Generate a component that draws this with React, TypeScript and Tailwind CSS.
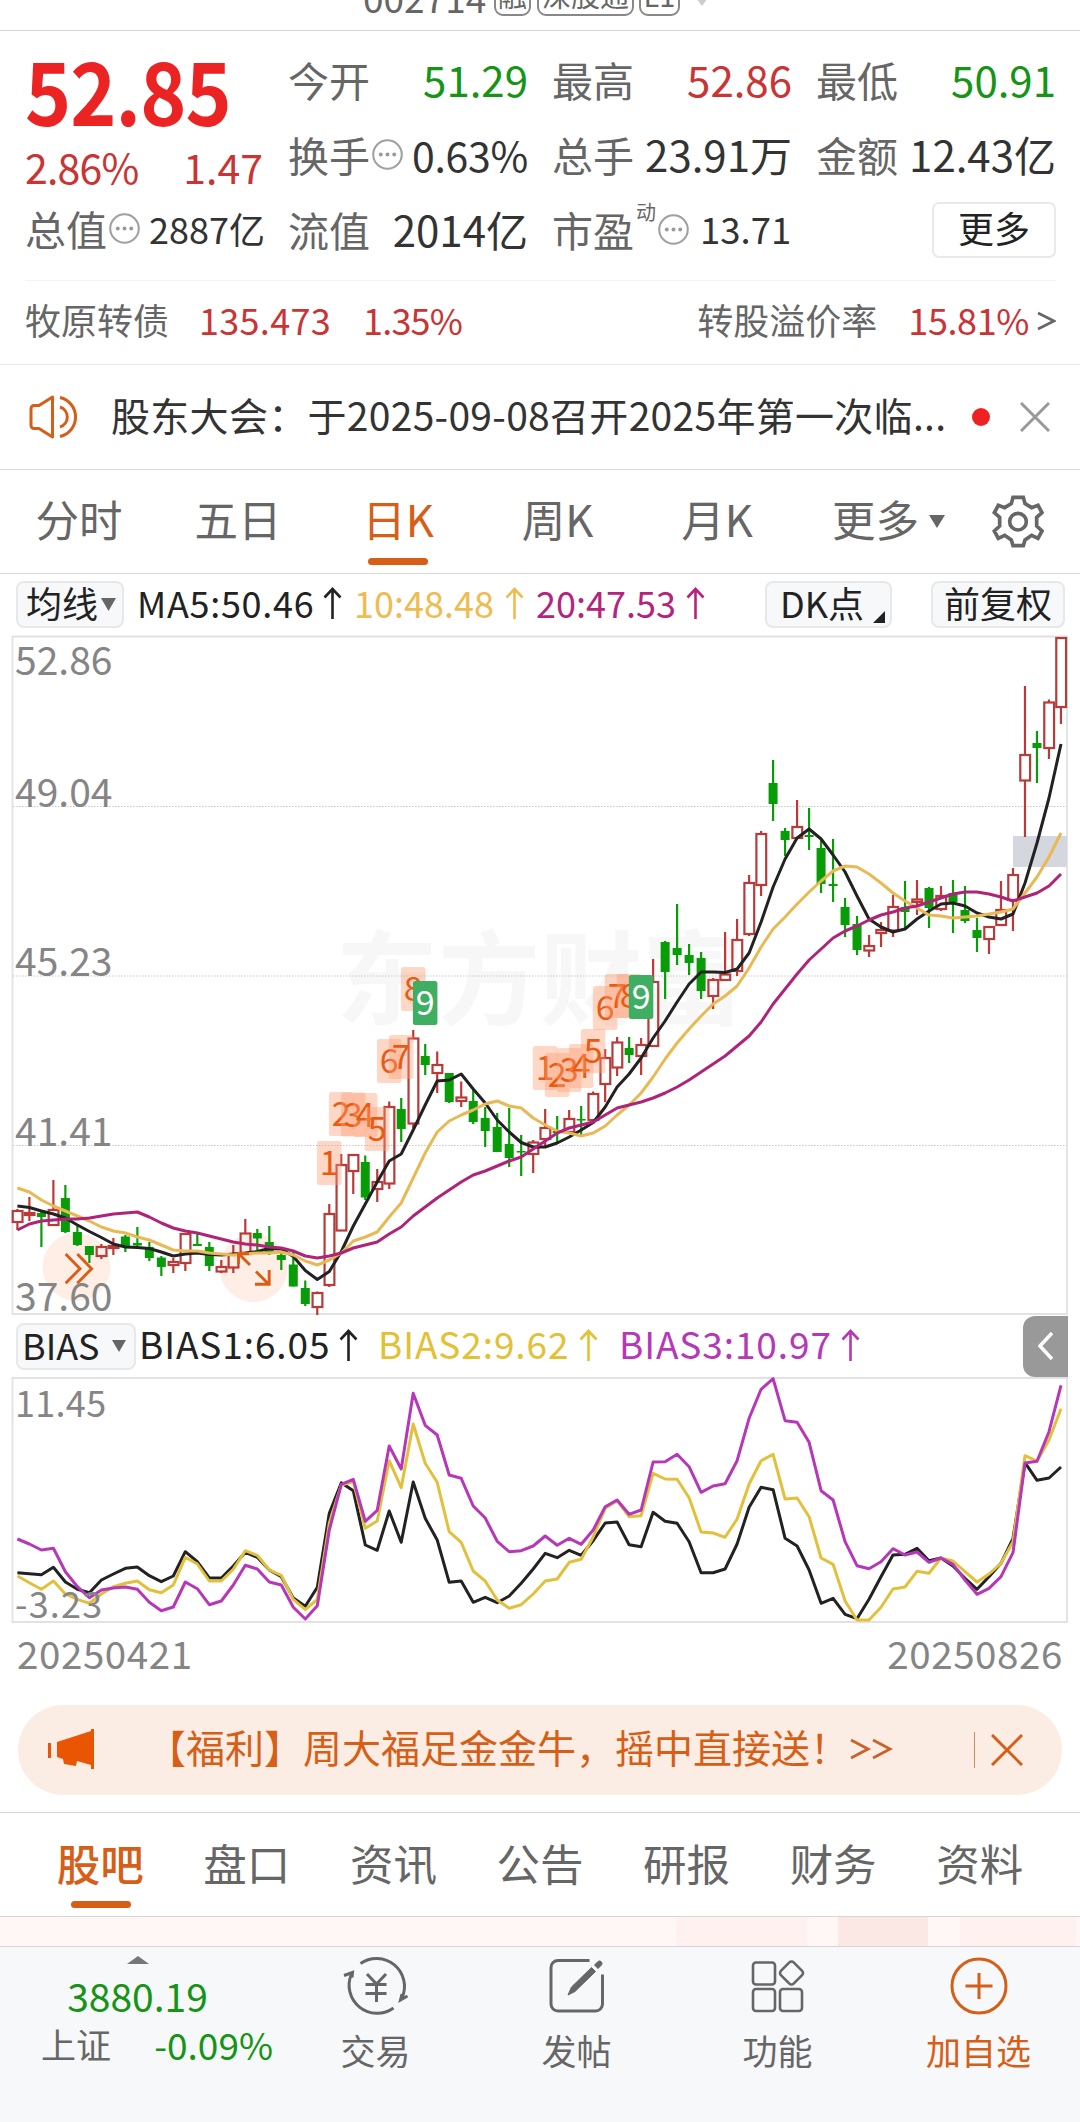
import type { ReactNode } from "react";

// [direction, high, body top, body bottom, low]
type Candle = ["r" | "g", number, number, number, number];

const candles: Candle[] = [
  ["r", 1209, 1211, 1222, 1230], ["r", 1197, 1213, 1215, 1221], ["g", 1211, 1213, 1217, 1247], ["r", 1180, 1210, 1225, 1225],
  ["g", 1185, 1198, 1232, 1233], ["g", 1226, 1232, 1245, 1246], ["g", 1246, 1246, 1255, 1263], ["r", 1244, 1247, 1256, 1259],
  ["r", 1238, 1246, 1248, 1255], ["g", 1235, 1236.5, 1247, 1252], ["g", 1227, 1243, 1245.5, 1247], ["g", 1242, 1247, 1258, 1261],
  ["g", 1256, 1257.5, 1267, 1276], ["r", 1258, 1262, 1265, 1273], ["r", 1233, 1234, 1263, 1271], ["g", 1234, 1244, 1246, 1246],
  ["g", 1242, 1247, 1266, 1271], ["r", 1260, 1267, 1271.5, 1273], ["r", 1245, 1255, 1267.5, 1273], ["r", 1219, 1233.5, 1254, 1254],
  ["g", 1229, 1233, 1238.5, 1253], ["g", 1226, 1242, 1254, 1255], ["g", 1253, 1255, 1260, 1270], ["g", 1250, 1264.5, 1286.5, 1286.5],
  ["g", 1280.5, 1288, 1304, 1306], ["r", 1291.5, 1293, 1307, 1315], ["r", 1204, 1214, 1285, 1287], ["r", 1154, 1165, 1230.5, 1231],
  ["r", 1154, 1155, 1171, 1194], ["g", 1155.5, 1162, 1197.5, 1200], ["r", 1169, 1182, 1189, 1202], ["r", 1101.5, 1107, 1183.5, 1189],
  ["g", 1098, 1109, 1129, 1142], ["r", 1030, 1038.5, 1123.5, 1128], ["g", 1044, 1056, 1065, 1075], ["r", 1051.5, 1065, 1073, 1093],
  ["g", 1073, 1073, 1102, 1103], ["r", 1081.5, 1097.5, 1101, 1107], ["g", 1090, 1101, 1122, 1124], ["g", 1107, 1118, 1131, 1147],
  ["g", 1113, 1127, 1152, 1152], ["g", 1108, 1144, 1158, 1167], ["g", 1135, 1151, 1152.5, 1176], ["r", 1140, 1142.5, 1154, 1173],
  ["r", 1109, 1128, 1139, 1148], ["g", 1116, 1131, 1133, 1143], ["r", 1110, 1119, 1132, 1134], ["g", 1106, 1119, 1120.5, 1135],
  ["r", 1091.5, 1094, 1120, 1123], ["r", 1049, 1058, 1084, 1102], ["r", 1037, 1042.5, 1067.5, 1076], ["g", 1037, 1048, 1055, 1063],
  ["r", 1038, 1045, 1056, 1075], ["r", 959, 982, 1046, 1047], ["g", 941, 942, 972, 999], ["g", 904, 948, 955, 965],
  ["g", 944, 955, 963, 975], ["g", 952, 958, 991, 999], ["r", 978, 980, 996, 1009], ["r", 932, 974.5, 980, 981],
  ["r", 919, 940, 971, 976], ["r", 875, 883, 934, 936], ["r", 831, 834, 885, 896], ["g", 760, 783, 804, 821],
  ["g", 828, 831, 840, 856], ["r", 800, 827, 838, 839], ["g", 808, 835, 837, 850], ["g", 840, 848, 884, 893],
  ["g", 839, 884, 886, 902], ["g", 898, 907, 925, 937], ["g", 916, 924, 950, 955], ["r", 935, 946, 950.5, 957],
  ["r", 922, 930, 933, 947], ["r", 895, 907, 930.5, 937], ["g", 881, 907, 912, 929], ["r", 880, 899.5, 902, 915],
  ["g", 887, 888, 908, 928], ["r", 886, 896, 909, 911], ["g", 880, 893, 902, 933], ["g", 886, 910, 921, 923],
  ["g", 918, 930, 938, 952], ["r", 926, 927, 939, 954], ["r", 881, 910, 925, 926], ["r", 868, 875, 900, 931],
  ["r", 686, 755, 780.5, 837], ["g", 731, 743, 748, 783], ["r", 699.5, 702.5, 748, 759], ["r", 637, 638, 707, 724],
];

const ma5 = [
  1206, 1207.5, 1211, 1214, 1218, 1225, 1231.5, 1237.5, 1244, 1247, 1247.5, 1248.5, 1252, 1256, 1254, 1253, 1254.5, 1255, 1254, 1253,
  1251.5, 1248.5, 1249, 1256.5, 1270.5, 1279.5, 1271.5, 1251.5, 1226, 1204, 1182, 1161, 1154, 1130, 1105, 1081, 1080, 1074, 1089, 1103,
  1120, 1132, 1142.5, 1147, 1147, 1143, 1137, 1130, 1122.5, 1107, 1087, 1074, 1058, 1038, 1021, 1002, 984, 972, 972, 972.5,
  969, 953, 922, 887, 859, 838, 829, 839, 855, 872, 896, 919, 927, 932, 929, 919, 911, 904, 903, 906,
  913, 917, 919, 914, 883, 843, 798, 744,
];

const ma10 = [
  1188, 1192, 1200, 1206, 1211, 1216, 1221, 1227, 1231, 1233, 1237, 1240, 1245, 1250, 1251, 1251, 1253, 1254, 1255, 1254,
  1253, 1253, 1252, 1255, 1261, 1265, 1260, 1253, 1241, 1237, 1232, 1217, 1203, 1178, 1153, 1132, 1121, 1115, 1110, 1104,
  1101, 1106, 1108, 1118, 1125, 1131, 1133, 1136, 1133, 1126, 1115, 1105, 1093, 1077, 1059, 1043, 1029, 1016, 1004, 996,
  986, 968, 947, 929, 917, 904, 892, 881, 871, 866, 867, 874, 883, 893, 901, 908, 915, 916, 918, 917,
  916, 914, 912, 909, 893, 877, 857, 833,
];

const ma20 = [
  1230, 1224, 1221, 1220, 1219, 1219, 1218, 1216, 1214, 1213, 1212, 1217, 1223, 1228, 1231, 1233, 1236, 1239, 1242, 1244,
  1245, 1247, 1248, 1251, 1256, 1258, 1256, 1253, 1248, 1245, 1242, 1234, 1227, 1216, 1207, 1198, 1190, 1182, 1175, 1171,
  1166, 1161, 1157, 1149, 1141, 1133, 1128, 1125, 1122, 1115, 1108, 1105, 1102, 1098, 1093, 1087, 1080, 1072, 1064, 1056,
  1046, 1036, 1022, 1004, 989, 974, 960, 949, 938, 931, 926, 920, 915, 912, 908, 906, 902, 898, 894, 892,
  892, 894, 897, 901, 897, 893, 886, 874,
];

// BIAS series are kept at three units per pixel
const bias1 = [
  608, 611, 614, 592, 636, 658, 668, 630, 612, 595, 591, 617, 635, 618, 545, 575, 624, 624, 588, 547, 562, 600, 620, 684, 709, 652, 430,
  338, 362, 525, 541, 423, 517, 336, 445, 510, 637, 633, 697, 682, 698, 678, 640, 597, 550, 563, 541, 556, 512, 459, 456, 524, 530, 427,
  454, 460, 515, 608, 608, 597, 522, 412, 352, 359, 505, 528, 600, 700, 685, 733, 746, 688, 620, 555, 553, 535, 572, 564, 588, 625, 658,
  620, 580, 505, 278, 331, 324, 291,
];

const bias2 = [
  618, 638, 658, 633, 672, 688, 700, 672, 650, 640, 633, 659, 668, 645, 562, 582, 633, 633, 598, 542, 556, 600, 616, 688, 719, 688, 460,
  345, 335, 475, 453, 272, 353, 162, 280, 337, 485, 517, 603, 633, 690, 715, 704, 672, 633, 627, 577, 568, 500, 415, 392, 440, 437, 310,
  327, 328, 383, 486, 489, 502, 447, 342, 272, 253, 387, 384, 440, 564, 583, 693, 750, 750, 712, 657, 651, 604, 610, 564, 573, 605, 636,
  612, 580, 515, 257, 273, 210, 116,
];

const bias3 = [
  507, 522, 540, 535, 605, 650, 683, 660, 654, 651, 658, 697, 722, 711, 636, 656, 704, 693, 645, 586, 597, 636, 645, 712, 747, 707, 480,
  343, 328, 454, 421, 228, 297, 70, 166, 195, 315, 325, 408, 444, 514, 545, 542, 528, 498, 526, 505, 523, 480, 410, 390, 433, 420, 276,
  275, 253, 290, 367, 348, 341, 272, 145, 58, 26, 152, 157, 217, 362, 390, 515, 587, 596, 575, 536, 555, 546, 577, 564, 583, 630, 673,
  655, 620, 548, 279, 274, 185, 46,
];

// [candle index, top, digit]
const marks: [number, number, number][] = [
  [26, 1141, 1], [27, 1092, 2], [28, 1092.5, 3], [29, 1093, 4], [30, 1107, 5], [31, 1039, 6], [32, 1035, 7], [33, 967, 8], [34, 981, 9],
  [44, 1046, 1], [45, 1053, 2], [46, 1048, 3], [47, 1044, 4], [48, 1029, 5], [49, 986, 6], [50, 974, 7], [51, 974, 8], [52, 975, 9],
];

const cx = (i: number) => 17.4 + i * 11.995;
const line = (ys: number[]) => ys.map((y, i) => `${cx(i).toFixed(1)},${y}`).join(" ");
const biasLine = (ys: number[]) => line(ys.map((y) => +(1370 + y / 3).toFixed(1)));

function Dots() {
  return (
    <svg width="31" height="31" viewBox="0 0 30 30" className="ml-[2px] shrink-0" fill="none">
      <circle cx="15" cy="15" r="13.8" stroke="#a0a0a0" strokeWidth="2" />
      <g fill="#999">
        <circle cx="8.5" cy="15" r="1.9" />
        <circle cx="15" cy="15" r="1.9" />
        <circle cx="21.5" cy="15" r="1.9" />
      </g>
    </svg>
  );
}

function Up() {
  return (
    <svg width="19" height="33" viewBox="0 0 19 33" fill="none" stroke="currentColor" strokeWidth="2.6" className="mt-[4px] shrink-0">
      <path d="M9.5 32V2M1.5 10.5L9.5 2l8 8.5" />
    </svg>
  );
}

function Cell({ label, value, color, icon }: { label: string; value: string; color: string; icon?: ReactNode }) {
  return (
    <div className="flex h-[42px] items-center justify-between">
      <span className="flex items-center text-[#666]">{label}{icon}</span>
      <span className={color}>{value}</span>
    </div>
  );
}

function Quote() {
  return (
    <section className="h-[334px] border-b border-[#e8e8e8] pl-[25px] pr-[24px] text-[41px]">
      <div className="grid h-[250px] grid-cols-[239px_240px_240px_240px] gap-x-[24px] border-b border-[#f3f3f3]">
        <div className="pt-[13px]">
          <p className="h-[88px] origin-left scale-x-90 text-[87px] font-bold leading-[88px] tracking-[-1px] text-[#ec2323]">52.85</p>
          <div className="mt-[13px] flex h-[42px] items-center justify-between pr-px text-[#c93434]">
            <span className="tracking-[-0.8px]">2.86%</span>
            <span>1.47</span>
          </div>
          <div className="mt-[20px] flex h-[42px] items-center">
            <span className="text-[#666]">总值</span>
            <Dots />
            <span className="ml-[9px] text-[36px] text-[#333]">2887亿</span>
          </div>
        </div>
        <div className="flex flex-col gap-[33px] pt-[27px]">
          <Cell label="今开" value="51.29" color="text-[#159415] text-[42px]" />
          <Cell label="换手" value="0.63%" color="text-[#333] tracking-[-0.3px]" icon={<Dots />} />
          <Cell label="流值" value="2014亿" color="text-[#333] text-[42px]" />
        </div>
        <div className="flex flex-col gap-[33px] pt-[27px]">
          <Cell label="最高" value="52.86" color="text-[#c93434] text-[42px]" />
          <Cell label="总手" value="23.91万" color="text-[#333] text-[42px]" />
          <div className="flex h-[42px] items-center">
            <span className="text-[#666]">市盈</span>
            <span className="mb-[35px] ml-[2px] text-[20px] text-[#666]">动</span>
            <Dots />
            <span className="ml-[11px] text-[36.500px] text-[#333]">13.71</span>
          </div>
        </div>
        <div className="flex flex-col gap-[33px] pt-[27px]">
          <Cell label="最低" value="50.91" color="text-[#159415] text-[42px]" />
          <Cell label="金额" value="12.43亿" color="text-[#333] text-[42px]" />
          <button className="-mt-[6px] ml-auto flex h-[56px] w-[124px] items-center justify-center rounded-[7px] border-2 border-[#e9e9e9] pb-[6px] text-[36px] text-[#222]">
            更多
          </button>
        </div>
      </div>
      <div className="flex h-[81px] items-center pb-[6px] text-[36px] text-[#c93434]">
        <span className="w-[174px] text-[#666]">牧原转债</span>
        <span className="w-[164px] tracking-[0.3px]">135.473</span>
        <span className="tracking-[-0.8px]">1.35%</span>
        <span className="ml-auto mr-[31px] text-[#666]">转股溢价率</span>
        <span className="tracking-[-0.4px]">15.81%</span>
        <svg width="19" height="26" viewBox="0 0 19 26" fill="none" stroke="#666" strokeWidth="2.6" className="ml-[8px] mt-[4px]">
          <path d="M1 5l16 8-16 8" />
        </svg>
      </div>
    </section>
  );
}

function Notice() {
  return (
    <section className="flex h-[105px] items-center border-b border-[#d9d9d9] pl-[29px] text-[39px] text-[#333]">
      <svg width="52" height="44" viewBox="0 0 52 44" fill="none" stroke="#d65e17" strokeWidth="3" strokeLinejoin="round">
        <path d="M10 10.500H5a3 3 0 0 0-3 3v17a3 3 0 0 0 3 3h5L23.500 42V2z" />
        <path d="M31 12a10.500 10.500 0 0 1 0 20M31 2.500a20 20 0 0 1 0 39" />
      </svg>
      <span className="ml-[30px] w-[861px] pb-[6px] tracking-[0.300px]">股东大会：于2025-09-08召开2025年第一次临...</span>
      <span className="size-[18px] rounded-full bg-[#ee2222]" />
      <svg width="30" height="30" viewBox="0 0 30 30" stroke="#999" strokeWidth="3" className="ml-[30px]">
        <path d="M1 1l28 28M29 1L1 29" />
      </svg>
    </section>
  );
}

function PeriodTabs() {
  return (
    <nav className="flex h-[104px] items-center border-b border-[#d6d6d6] text-[43.500px] text-[#666]">
      <span className="w-[158px] pb-[5px] text-center">分时</span>
      <span className="w-[160px] pb-[5px] text-center">五日</span>
      <span className="flex h-full w-[160px] flex-col items-center pt-[27px] text-[#d65e17]">
        <span className="leading-[44px]">日K</span>
        <span className="mt-[17px] h-[7px] w-[60px] rounded-full bg-[#d65e17]" />
      </span>
      <span className="w-[159px] pb-[5px] text-center">周K</span>
      <span className="w-[160px] pb-[5px] text-center">月K</span>
      <span className="ml-[35px] pb-[5px]">更多</span>
      <svg width="16" height="13" viewBox="0 0 16 13" className="ml-[10px]">
        <path d="M0 0h16L8 13z" fill="#666" />
      </svg>
      <svg width="52" height="53" viewBox="397 45 156 159" fill="none" stroke="#666" strokeWidth="11" className="ml-[47px]">
        <path d="M460 52H491L496 71L516 83L535 76L547 98L531 112V138L547 153L535 175L516 166L496 180L491 197H460L455 180L435 166L416 175L404 153L420 138V112L404 98L416 76L435 83L455 71Z" />
        <circle cx="475" cy="125" r="25" />
      </svg>
    </nav>
  );
}

function KLine() {
  return (
    <svg width="1080" height="680" viewBox="0 635 1080 680" className="block" fill="none">
      <g fill="#f7f7f7" fontSize="102" fontWeight="700">
        <text x="336" y="1017">东方财富</text>
      </g>
      <path d="M12.500 636.500H1067V1314H12.500Z" stroke="#e2e2e2" strokeWidth="1.800" />
      <path d="M13 806.500H1067M13 976H1067M13 1145.500H1067" stroke="#c9c9c9" strokeDasharray="1.500 1.500" />
      <circle cx="76.500" cy="1267" r="34" fill="#feeee6" />
      <circle cx="253.500" cy="1268" r="34" fill="#feeee6" />
      <rect x="1013" y="836" width="54" height="31" fill="#d4d7dd" />
      <g fill="#858585" fontSize="39">
        <text x="15" y="675">52.86</text>
        <text x="15" y="807">49.04</text>
        <text x="15" y="976">45.23</text>
        <text x="15" y="1146">41.41</text>
        <text x="15" y="1311">37.60</text>
      </g>
      {candles.map(([dir, high, top, bottom, low], i) =>
        dir === "g" ? (
          <g key={i}>
            <path d={`M${cx(i)} ${high}V${low}`} stroke="#089c08" strokeWidth="2.2" />
            <rect x={cx(i) - 4.5} y={top} width="9" height={bottom - top} fill="#089c08" />
          </g>
        ) : (
          <g key={i} stroke="#b93a38" strokeWidth="2.2">
            <path d={`M${cx(i)} ${high}V${top}M${cx(i)} ${bottom}V${low}`} />
            <rect x={cx(i) - 4.7} y={top} width="9.800" height={bottom - top} />
          </g>
        )
      )}
      {marks.map(([i, y, n]) => (
        <g key={i}>
          <rect x={cx(i) - 12.3} y={y} width="24.500" height="44" rx="2.500" fill={n === 9 ? "#3eae62" : "#ff9a70"} fillOpacity={n === 9 ? 1 : 0.4} />
          <text x={cx(i)} y={y + 34} fontSize="34" textAnchor="middle" fill={n === 9 ? "#fff" : "#ea5a10"}>{n}</text>
        </g>
      ))}
      <g strokeWidth="3" strokeLinejoin="round">
        <polyline points={line(ma5)} stroke="#222" />
        <polyline points={line(ma10)} stroke="#e8b955" />
        <polyline points={line(ma20)} stroke="#ae2478" />
      </g>
      <g stroke="#dc5c14" strokeWidth="2.900">
        <path d="M65.700 1254L80 1268.700 65.700 1283.300M77.300 1254l14.300 14.700L77.300 1283.300" />
        <path d="M250 1265l-11.500-11.500M238.500 1264v-10.500H249M256 1271.500l12.500 12.500M269.200 1270v14.300H255" />
      </g>
    </svg>
  );
}

function Bias() {
  return (
    <svg width="1080" height="248" viewBox="0 1377 1080 248" className="block" fill="none">
      <path d="M12.500 1378H1067V1622H12.500Z" stroke="#e2e2e2" strokeWidth="1.800" />
      <g strokeWidth="3" strokeLinejoin="round">
        <polyline points={biasLine(bias1)} stroke="#222" />
        <polyline points={biasLine(bias2)} stroke="#e2c03c" />
        <polyline points={biasLine(bias3)} stroke="#b637b8" />
      </g>
      <g fill="#858585" fontSize="36">
        <text x="15" y="1417" letterSpacing="0.300">11.45</text>
        <text x="15" y="1618" letterSpacing="1.200">-3.23</text>
      </g>
    </svg>
  );
}

function Promo() {
  return (
    <div className="mx-[18px] mt-[20px] flex h-[90px] items-center rounded-full bg-[#fcede4] pl-[30px] text-[39px] text-[#d65e17]">
      <svg width="46" height="42" viewBox="0 0 46 42" fill="#ea5504">
        <path d="M0 14h3v15H0zM9 13L43 2V0h3v40h-3v-4l-14-4-1 5-12-2-1-5-6-2z" />
      </svg>
      <span className="ml-[53px] pb-[7px]">【福利】周大福足金金牛，摇中直接送！</span>
      <svg width="44" height="22" viewBox="0 0 44 22" fill="none" stroke="#c9622b" strokeWidth="2.900" className="mb-[3px]">
        <path d="M2 2l17 9-17 9M24 2l17 9-17 9" />
      </svg>
      <span className="ml-auto h-[36px] w-[1.500px] bg-[#d08a62]" />
      <svg width="32" height="32" viewBox="0 0 32 32" stroke="#d65e17" strokeWidth="3" className="ml-[16px] mr-[39px]">
        <path d="M1 1l30 30M31 1L1 31" />
      </svg>
    </div>
  );
}

function SectionTabs() {
  const tabs = ["盘口", "资讯", "公告", "研报", "财务", "资料"];
  return (
    <nav className="mt-[17px] grid h-[105px] grid-cols-7 border-y border-[#d6d6d6] px-[27px] pt-[28px] text-[43.500px] text-[#666]">
      <span className="flex flex-col items-center text-[#d65e17]">
        <span className="font-medium leading-[44px]">股吧</span>
        <span className="ml-[2px] mt-[16px] h-[7px] w-[60px] rounded-full bg-[#d65e17]" />
      </span>
      {tabs.map((tab) => (
        <span key={tab} className="text-center leading-[44px]">{tab}</span>
      ))}
    </nav>
  );
}

function NavItem({ label, color, children }: { label: string; color: string; children: ReactNode }) {
  return (
    <div className={`flex w-[201px] flex-col items-center pt-[8px] ${color}`}>
      <svg width="66" height="62" viewBox="0 0 66 62" fill="none" stroke="currentColor" strokeWidth="3">
        {children}
      </svg>
      <span className="mt-[14px] text-[35px] leading-[38px]">{label}</span>
    </div>
  );
}

function BottomNav() {
  return (
    <nav className="flex h-[176px] border-t border-[#d3d6d9] bg-[#f7f8fa] text-[#666]">
      <div className="flex w-[275px] flex-col items-center pt-[9px]">
        <svg width="22" height="8" viewBox="0 0 22 8">
          <path d="M0 8h22L11 0z" fill="#777" />
        </svg>
        <span className="mt-[10px] text-[39px] leading-[42px] text-[#159415]">3880.19</span>
        <div className="mt-[8px] flex w-full items-center justify-between pl-[41px] pr-[2px] text-[35px] leading-[40px]">
          <span>上证</span>
          <span className="text-[37px] text-[#159415]">-0.09%</span>
        </div>
      </div>
      <NavItem label="交易" color="text-[#666]">
        <path d="M17.500 8.500A28 28 0 0 1 59 43l-1 .500M50.500 53A28 28 0 0 1 8.500 19M1 20.500l8.500-3-.5 5M64.500 41L57.500 45l1.500-6" />
        <path d="M24 19l9.500 10L43 19M22.500 29.500h21M22.500 38.500h21M33.500 29v18" />
      </NavItem>
      <NavItem label="发帖" color="text-[#666]">
        <path d="M45.500 5.500H14a7 7 0 0 0-7 7V49a7 7 0 0 0 7 7H51.500a7 7 0 0 0 7-7V19.500" />
        <path d="M24 40l3.500-8L47.500 12.500l4 4L31 36.500zM50.500 10l3.500-3.500a2.500 2.500 0 0 1 3.500 3.500L54 13.500z" fill="currentColor" strokeWidth="1" />
      </NavItem>
      <NavItem label="功能" color="text-[#666]">
        <rect x="8" y="7.500" width="22" height="22" rx="3" strokeWidth="2.600" />
        <rect x="8" y="34" width="22" height="22" rx="3" strokeWidth="2.600" />
        <rect x="35" y="34" width="22" height="22" rx="3" strokeWidth="2.600" />
        <rect x="37.500" y="9" width="18" height="18" rx="3" transform="rotate(45 46.500 18)" strokeWidth="2.600" />
      </NavItem>
      <NavItem label="加自选" color="text-[#d65e17]">
        <circle cx="33" cy="31" r="27" />
        <path d="M33 18v26M19.500 31h27" />
      </NavItem>
    </nav>
  );
}

export default function App() {
  return (
    <div className="flex h-[2122px] w-[1080px] flex-col overflow-hidden whitespace-nowrap bg-white font-['Noto_Sans_CJK_SC','Noto_Sans',sans-serif] leading-none">
      <header className="flex h-[31px] items-end overflow-hidden border-b border-[#d6d6d6] pb-[14px] pl-[363px] text-[37px] text-[#666]">
        <span className="w-[131px]">002714</span>
        <span className="flex h-[44px] w-[37px] items-center justify-center rounded-[9px] border-2 border-[#888] text-[29px]">融</span>
        <span className="ml-[6px] flex h-[44px] w-[97px] items-center justify-center rounded-[9px] border-2 border-[#888] text-[29px]">深股通</span>
        <span className="ml-[5px] flex h-[44px] w-[41px] items-center justify-center rounded-[9px] border-2 border-[#888] text-[29px]">L1</span>
        <svg width="12" height="18" viewBox="0 0 12 18" className="ml-[16px]">
          <path d="M0 0h12L6 8z" fill="#ccc" />
        </svg>
      </header>

      <Quote />
      <Notice />
      <PeriodTabs />

      <div className="flex h-[61px] items-center pl-[16px] text-[36px] text-[#222]">
        <div className="flex h-[47px] w-[108px] items-center rounded-[8px] border-2 border-[#e6e8ea] bg-[#f7f8fa] pb-[5px] pl-[8px]">
          均线
          <svg width="15" height="13" viewBox="0 0 15 13" className="ml-[3px] mt-[5px]">
            <path d="M0 0h15L7.500 13z" fill="#666" />
          </svg>
        </div>
        <div className="flex items-center pb-[6px]">
          <span className="ml-[13px] w-[186px] tracking-[0.700px]">MA5:50.46</span>
          <Up />
          <span className="ml-[12px] flex w-[182px] items-center text-[#eebc50]">
            <span className="w-[151px]">10:48.48</span>
            <Up />
          </span>
          <span className="flex w-[229px] items-center text-[#b32480]">
            <span className="w-[150px]">20:47.53</span>
            <Up />
          </span>
        </div>
        <div className="flex h-[47px] w-[127px] items-end justify-end rounded-[8px] border-2 border-[#e6e8ea] bg-[#f7f8fa] pb-[3px] pr-[5px]">
          <span className="pb-[3px]">DK点</span>
          <svg width="12" height="12" viewBox="0 0 12 12" className="ml-[9px]">
            <path d="M12 0v12H0z" fill="#222" />
          </svg>
        </div>
        <div className="ml-[39px] flex h-[47px] w-[134px] items-center justify-center rounded-[8px] border-2 border-[#e6e8ea] bg-[#f7f8fa] pb-[5px]">前复权</div>
      </div>

      <KLine />

      <div className="flex h-[62px] items-center pl-[16px] text-[37px] text-[#222]">
        <div className="flex h-[47px] w-[120px] items-center rounded-[8px] border-2 border-[#e6e8ea] bg-[#f7f8fa] pb-[5px] pl-[4px] text-[36px]">
          BIAS
          <svg width="14" height="12" viewBox="0 0 14 12" className="ml-auto mr-[8px] mt-[5px]">
            <path d="M0 0h14L7 12z" fill="#666" />
          </svg>
        </div>
        <div className="flex items-center pb-[6px] tracking-[0.900px]">
          <span className="ml-[3px] w-[200px]">BIAS1:6.05</span>
          <Up />
          <span className="ml-[20px] flex w-[241px] items-center text-[#e3c034]">
            <span className="w-[201px]">BIAS2:9.62</span>
            <Up />
          </span>
          <span className="flex items-center text-[#b637b8]">
            <span className="w-[222px]">BIAS3:10.97</span>
            <Up />
          </span>
        </div>
        <div className="ml-auto mr-[12px] flex h-[61px] w-[45px] items-center justify-center rounded-l-[12px] bg-[#999]">
          <svg width="16" height="28" viewBox="0 0 16 28" fill="none" stroke="#fff" strokeWidth="3.500">
            <path d="M14 1L2 14l12 13" />
          </svg>
        </div>
      </div>

      <Bias />

      <div className="flex h-[60px] items-center justify-between px-[17px] pb-[6px] text-[38.500px] tracking-[0.600px] text-[#858585]">
        <span>20250421</span>
        <span>20250826</span>
      </div>

      <Promo />
      <SectionTabs />

      <div className="flex h-[29px] bg-[#fff7f5]">
        <div className="ml-[676px] h-full w-[131px] bg-[#fef1ef]" />
        <div className="ml-[31px] h-full w-[90px] bg-[#fbe7e4]" />
        <div className="ml-[32px] h-full w-[116px] bg-[#fef1ef]" />
      </div>

      <BottomNav />
    </div>
  );
}
